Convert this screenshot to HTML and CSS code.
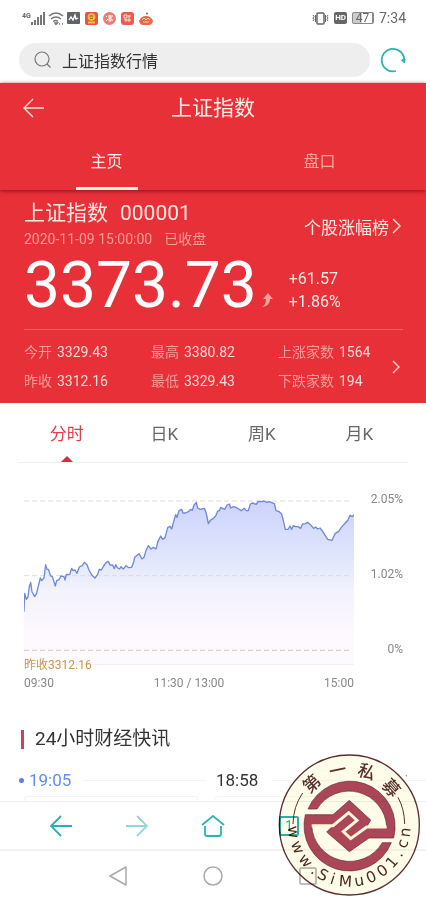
FILE: index.html
```html
<!DOCTYPE html>
<html lang="zh-CN">
<head>
    <meta charset="UTF-8">
    <meta name="viewport" content="width=device-width, initial-scale=1.0">
    <title>上证指数</title>
    <link rel="stylesheet" href="styles.css">
</head>
<body>
<div class="app">

    <!-- Status bar -->
    <div class="status-bar">
        <div class="status-left">
            <span class="network">4G</span>
            <svg width="14" height="13" viewBox="0 0 14 13" fill="#777"><path d="M0 10h2v3H0zM3 8h2v5H3zM6 5h2v8H6zM9 3h2v10H9zM12 0h2v13h-2z"/></svg>
            <svg class="wifi" width="16" height="13" viewBox="0 0 16 13" fill="none" stroke="#777" stroke-width="1.4"><path d="M1 4Q8-2 15 4M3 7q5-4 10 0M5 9.500q3-2 5 0"/><path d="M7 11l1 1.500L9.500 11zM11 12h1M14 12h1" fill="#777"/></svg>
            <svg width="13" height="12" viewBox="0 0 13 12"><rect width="13" height="12" rx="1" fill="#606468"/><path d="M2 8l2-3 2 3 2-5 1 4 2-1" fill="none" stroke="#fff" stroke-width="1.300"/></svg>
            <svg width="13" height="13" viewBox="0 0 13 13"><rect width="13" height="13" rx="2" fill="#e2583f"/><circle cx="6.500" cy="5" r="3.800" fill="#f9c13c"/><path d="M4.500 4h4M5 6q1.500 1 3 0" stroke="#b4372a" fill="none"/><path d="M3 10.500h7" stroke="#f9c13c" stroke-width="2"/></svg>
            <svg width="13" height="13" viewBox="0 0 13 13"><circle cx="6.500" cy="6.500" r="6.500" fill="#f07a74"/><path d="M3 4l1 1M3 9l2-2M5 4h5M7 3v7M5 6h4M5 8h5" stroke="#fff" fill="none"/></svg>
            <svg width="13" height="13" viewBox="0 0 13 13"><rect width="13" height="13" rx="3" fill="#ec5b50"/><path d="M3 3h3v3H3zM3 8h7M8 3v7M5 7v3M7 4h3" stroke="#ffe4d4" fill="none"/></svg>
            <svg width="14" height="13" viewBox="0 0 14 13"><circle cx="8" cy="1.500" r="1" fill="#8b5a4b"/><path d="M0 9q2-5 7-5t7 5q-1 4-4 4H4q-3 0-4-4z" fill="#e8674d"/><path d="M3 8l2-2 2 2 2-2 2 2M4 10h6" stroke="#ffd0a0" fill="none"/></svg>
        </div>
        <div class="status-right">
            <svg width="17" height="13" viewBox="0 0 17 13" fill="none" stroke="#666"><rect x="5" y="1" width="7" height="11" rx="1" stroke-width="1.500"/><path d="M1 3l1 1.500L1 6l1 1.500L1 9M3.500 3v7M16 3l-1 1.500L16 6l-1 1.500L16 9M13.500 3v7"/></svg>
            <span class="hd">HD</span>
            <span class="battery">47</span>
            <span>7:34</span>
        </div>
    </div>

    <!-- Search -->
    <div class="search-bar">
        <label class="search-box">
            <svg width="18" height="18" viewBox="0 0 18 18" fill="none" stroke="#777" stroke-width="1.200"><circle cx="8" cy="8" r="7"/><path d="M13 13l3.500 3.500"/></svg>
            <input class="search-input" type="text" value="上证指数行情" aria-label="搜索">
        </label>
        <button class="icon-button" aria-label="刷新">
            <svg width="26" height="26" viewBox="0 0 26 26" fill="none" stroke="#2ab3ab" stroke-width="1.800"><path d="M16 24A11.300 11.300 0 1 1 24.300 13"/><path d="M21.500 13l3 3 .5-4z" fill="#2ab3ab" stroke-width="1"/></svg>
        </button>
    </div>

    <!-- Header -->
    <header class="header">
        <div class="title-row">
            <button class="icon-button" aria-label="返回">
                <svg width="21" height="20" viewBox="0 0 21 20" fill="none" stroke="#ffe3dc" stroke-width="1.400"><path d="M10 1L1 10l9 9M1 10h20"/></svg>
            </button>
            <h1>上证指数</h1>
        </div>
        <nav class="tabs">
            <a class="tab active" href="#home">主页</a>
            <a class="tab" href="#pankou">盘口</a>
        </nav>
    </header>

    <main class="content">
        <!-- Quote -->
        <section class="quote">
            <div class="quote-top">
                <div>
                    <h2>上证指数<span class="code">000001</span></h2>
                    <p class="date">2020-11-09 15:00:00<span class="closed">已收盘</span></p>
                </div>
                <a class="rank-link" href="#rank">个股涨幅榜<svg width="9" height="16" viewBox="0 0 9 16" fill="none" stroke="#ffe3dc" stroke-width="1.400"><path d="M1 1l7 7-7 7"/></svg></a>
            </div>
            <div class="price-row">
                <span class="price">3373.73</span>
                <svg class="up" width="11" height="14" viewBox="0 0 11 14" fill="#ff9c9c"><path d="M6 0l5 6H8q0 7-8 8 4-2 4-8H1z"/></svg>
                <div class="change"><p>+61.57</p><p>+1.86%</p></div>
            </div>
            <div class="stats-row">
                <dl class="stats">
                    <div><dt>今开</dt><dd>3329.43</dd></div>
                    <div><dt>最高</dt><dd>3380.82</dd></div>
                    <div><dt>上涨家数</dt><dd>1564</dd></div>
                    <div><dt>昨收</dt><dd>3312.16</dd></div>
                    <div><dt>最低</dt><dd>3329.43</dd></div>
                    <div><dt>下跌家数</dt><dd>194</dd></div>
                </dl>
                <svg class="more" width="8" height="14" viewBox="0 0 8 14" fill="none" stroke="#ffd0cc" stroke-width="1.400"><path d="M1 1l6 6-6 6"/></svg>
            </div>
        </section>

        <!-- Chart -->
        <nav class="periods">
            <a class="period active" href="#m">分时</a>
            <a class="period" href="#d">日K</a>
            <a class="period" href="#w">周K</a>
            <a class="period" href="#mo">月K</a>
        </nav>
        <section class="chart">
            <div class="plot">
                <svg class="plot-svg" viewBox="72 51 990 507" preserveAspectRatio="none">
                    <defs>
                        <linearGradient id="area" x1="0" y1="0" x2="0" y2="1">
                            <stop offset="0" stop-color="#cdd3fb"/>
                            <stop offset=".35" stop-color="#e0e6fc"/>
                            <stop offset=".55" stop-color="#f3f2fd"/>
                            <stop offset=".8" stop-color="#fcf8fe"/>
                            <stop offset="1" stop-color="#fefbff"/>
                        </linearGradient>
                    </defs>
                    <path fill="url(#area)" d="M72 395L74 340 79 358 84 351 88 320 92 307 96 336 104 350 110 340 114 322 121 294 125 302 132 294 137 254 141 268 145 268 152 288 157 290 166 318 170 302 177 299 183 288 192 290 195 300 199 283 209 284 215 265 219 272 225 270 231 280 238 261 247 257 253 247 261 254 267 270 276 286 285 294 293 283 298 268 304 270 311 258 318 248 325 244 330 255 338 255 343 266 347 254 352 263 359 267 363 260 370 267 378 257 386 263 395 262 401 246 404 232 417 221 426 237 432 232 438 212 445 197 453 207 460 202 468 207 474 184 482 168 488 178 495 173 503 143 510 139 515 147 521 125 527 104 531 112 537 92 545 88 549 99 557 99 565 95 572 88 577 91 582 75 589 67 593 84 601 88 613 85 619 100 625 131 631 121 639 116 647 108 653 94 659 91 662 82 674 88 681 75 688 72 692 84 700 80 708 82 716 87 724 92 733 85 739 92 745 92 751 72 757 69 769 73 774 64 785 65 792 63 800 67 808 65 823 71 828 92 836 94 845 102 850 122 856 148 864 148 870 138 875 148 880 137 887 140 894 140 902 145 908 132 917 131 923 127 932 135 941 145 947 141 953 147 960 144 968 154 983 178 996 181 1005 161 1016 154 1024 142 1033 132 1044 120 1050 106 1057 110 1062 104V553H72z"/>
                    <path class="grid" d="M72 63H1056M72 287H1056"/>
                    <path class="grid zero" d="M72 511H1056"/>
                    <path class="axis" d="M72 553H1062"/>
                    <path class="line" d="M72 395L74 340 79 358 84 351 88 320 92 307 96 336 104 350 110 340 114 322 121 294 125 302 132 294 137 254 141 268 145 268 152 288 157 290 166 318 170 302 177 299 183 288 192 290 195 300 199 283 209 284 215 265 219 272 225 270 231 280 238 261 247 257 253 247 261 254 267 270 276 286 285 294 293 283 298 268 304 270 311 258 318 248 325 244 330 255 338 255 343 266 347 254 352 263 359 267 363 260 370 267 378 257 386 263 395 262 401 246 404 232 417 221 426 237 432 232 438 212 445 197 453 207 460 202 468 207 474 184 482 168 488 178 495 173 503 143 510 139 515 147 521 125 527 104 531 112 537 92 545 88 549 99 557 99 565 95 572 88 577 91 582 75 589 67 593 84 601 88 613 85 619 100 625 131 631 121 639 116 647 108 653 94 659 91 662 82 674 88 681 75 688 72 692 84 700 80 708 82 716 87 724 92 733 85 739 92 745 92 751 72 757 69 769 73 774 64 785 65 792 63 800 67 808 65 823 71 828 92 836 94 845 102 850 122 856 148 864 148 870 138 875 148 880 137 887 140 894 140 902 145 908 132 917 131 923 127 932 135 941 145 947 141 953 147 960 144 968 154 983 178 996 181 1005 161 1016 154 1024 142 1033 132 1044 120 1050 106 1057 110 1062 104"/>
                </svg>
                <span class="prev-close">昨收3312.16</span>
                <div class="x-axis"><span>09:30</span><span>11:30 / 13:00</span><span>15:00</span></div>
            </div>
            <div class="y-axis"><span>2.05%</span><span>1.02%</span><span>0%</span></div>
        </section>

        <!-- News -->
        <section class="news">
            <h3>24小时财经快讯</h3>
            <div class="timeline">
                <span class="time latest">19:05</span>
                <span class="time">18:58</span>
            </div>
            <div class="cards"><div class="card"></div><div class="card"></div></div>
        </section>
    </main>

    <!-- Browser toolbar -->
    <nav class="toolbar">
        <button class="icon-button" aria-label="后退"><svg width="22" height="22" viewBox="0 0 22 22" fill="none" stroke="#2aafae" stroke-width="1.800"><path d="M11 1L1 11l10 10M1 11h21"/></svg></button>
        <button class="icon-button" aria-label="前进"><svg width="22" height="22" viewBox="0 0 22 22" fill="none" stroke="#93d8d7" stroke-width="1.800"><path d="M11 1l10 10-10 10M21 11H0"/></svg></button>
        <button class="icon-button" aria-label="主页"><svg width="24" height="22" viewBox="0 0 24 22" fill="none" stroke="#2ab5b4" stroke-width="1.800"><path d="M1 10L12 1l11 9M4 11v8q0 2 2 2h12q2 0 2-2v-8"/></svg></button>
        <button class="icon-button tab-count" aria-label="标签页">1</button>
        <button class="icon-button" aria-label="菜单"></button>
    </nav>

    <!-- System keys -->
    <div class="system-bar">
        <button class="icon-button" aria-label="返回键"><svg width="18" height="20" viewBox="0 0 18 20" fill="none" stroke="#aaa" stroke-width="1.500" stroke-linejoin="round"><path d="M17 1v18L1 10z"/></svg></button>
        <button class="icon-button" aria-label="主屏键"><svg width="20" height="20" viewBox="0 0 20 20" fill="none" stroke="#aaa" stroke-width="1.500"><circle cx="10" cy="10" r="9"/></svg></button>
        <button class="icon-button" aria-label="多任务键"><svg width="18" height="18" viewBox="0 0 18 18" fill="none" stroke="#aaa" stroke-width="1.500"><rect x="1" y="1" width="16" height="16" rx="1"/></svg></button>
    </div>

    <!-- Stamp -->
    <svg class="stamp" viewBox="22 20 435 435">
        <circle cx="239" cy="239" r="210" fill="#fffdea" stroke="#57302f" stroke-width="4"/>
        <path d="M70 236Q71 183 99 143M405 236Q404 190 385 156" fill="none" stroke="#57302f" stroke-width="3"/>
        <g class="stamp-logo">
            <path d="M115 191A136 136 0 0 1 372 278H298L239 319 171 260 190 241 237 202 262 225 221 259 243 280 291 245H351A113 113 0 0 0 142 191Z"/>
            <path d="M107 208H190L239 165 303 224 291 245 243 280 221 259 262 225 237 202 190 241H126A114 114 0 0 0 338 292H365A136 136 0 0 1 107 208Z"/>
            <path class="cut" d="M126 241H190L237 202 262 225 221 259 243 280 291 245H351"/>
        </g>
        <g class="stamp-name" transform="translate(239 240)">
            <text y="-150" transform="rotate(-42)">第</text>
            <text y="-150" transform="rotate(-12)">一</text>
            <text y="-150" transform="rotate(18)">私</text>
            <text y="-150" transform="rotate(48)">募</text>
        </g>
        <g class="stamp-url" transform="translate(239 240)">
            <text y="184" transform="rotate(83)">w</text>
            <text y="184" transform="rotate(67)">w</text>
            <text y="184" transform="rotate(51)">w</text>
            <text y="184" transform="rotate(38)">.</text>
            <text y="184" transform="rotate(28)">S</text>
            <text y="184" transform="rotate(17)">i</text>
            <text y="184" transform="rotate(4)">M</text>
            <text y="184" transform="rotate(-10)">u</text>
            <text y="184" transform="rotate(-23)">0</text>
            <text y="184" transform="rotate(-36)">0</text>
            <text y="184" transform="rotate(-49)">1</text>
            <text y="184" transform="rotate(-60)">.</text>
            <text y="184" transform="rotate(-71)">c</text>
            <text y="184" transform="rotate(-83)">n</text>
        </g>
        <circle cx="410" cy="91" r="2" fill="#777"/>
    </svg>
</div>
</body>
</html>
```

FILE: styles.css
```css
* { box-sizing: border-box; }
body { margin: 0; font-family: Roboto, "Noto Sans CJK SC", sans-serif; background: #fff; color: #333; }
h1, h2, h3, p, dl, dd { margin: 0; font-weight: 400; }
a { color: inherit; text-decoration: none; }
svg { display: block; flex: none; }
.app { position: relative; display: flex; flex-direction: column; height: 100vh; overflow: hidden; }
.icon-button { display: flex; align-items: center; justify-content: center; padding: 0; border: none; background: none; }

/* status bar */
.status-bar { display: flex; justify-content: space-between; align-items: center; height: 36px; padding: 0 20px 0 22px; color: #666; font-size: 14px; flex: none; }
.status-left { display: flex; align-items: center; gap: 5px; }
.network { align-self: flex-start; margin-right: -5px; font-size: 7px; line-height: 8px; font-weight: 700; }
.wifi { margin: 0 -2px; }
.status-right { display: flex; align-items: center; gap: 5px; }
.hd { padding: 0 1px; border-radius: 2px; background: #666; color: #fff; font-size: 8px; line-height: 12px; font-weight: 700; }
.battery { width: 22px; border: 1px solid #888; border-right-width: 2px; border-radius: 2px; background: linear-gradient(90deg, #ccc 47%, #fff 47%); font-size: 12px; line-height: 10px; text-align: center; }

/* search */
.search-bar { display: flex; align-items: center; justify-content: space-between; gap: 10px; height: 47px; padding: 0 20px 0 19px; flex: none; }
.search-box { display: flex; align-items: center; gap: 10px; flex: 1; height: 34px; padding: 0 15px; border-radius: 17px; background: #eee; }
.search-input { flex: 1; min-width: 0; padding: 0; border: none; outline: none; background: none; color: #333; font: inherit; font-size: 16px; }

/* header */
.header { position: relative; z-index: 1; flex: none; background: #e83039; color: #fff0ea; box-shadow: 0 1px 4px #8c1018; }
.title-row { display: grid; grid-template-columns: 1fr auto 1fr; align-items: center; height: 50px; padding: 0 23px; }
.title-row .icon-button { justify-self: start; }
.title-row h1 { font-size: 21px; line-height: 30px; }
.tabs { display: grid; grid-template-columns: 1fr 1fr; height: 57px; justify-items: center; }
.tab { width: 62px; height: 57px; font-size: 16px; line-height: 57px; text-align: center; color: #f6a6a1; }
.tab.active { color: #fff0ea; border-bottom: 3px solid #fff0ea; }

.content { flex: 1; min-height: 0; overflow: hidden; }

/* quote */
.quote { padding: 10px 23px 7px 24px; background: #e83039; color: #ffe8e2; }
.quote-top { display: flex; justify-content: space-between; align-items: center; }
.quote h2 { font-size: 21px; line-height: 26px; }
.code { margin-left: 12px; }
.date { font-size: 14px; line-height: 26px; color: #f79c9a; }
.closed { margin-left: 12px; }
.rank-link { display: flex; align-items: center; gap: 3px; padding-right: 2px; font-size: 17px; }
.price-row { display: flex; align-items: center; height: 68px; color: #fff; }
.price { font-size: 64px; line-height: 68px; }
.up { margin: 28px 16px 0 5px; }
.change { padding-top: 8px; font-size: 16px; line-height: 23px; color: #ffe8e2; }
.stats-row { display: flex; align-items: center; margin-top: 9px; padding-top: 8px; border-top: 1px solid #f2625f; }
.stats { display: grid; grid-template-columns: 1fr 1fr 114px; flex: 1; font-size: 14px; line-height: 29px; white-space: nowrap; }
.stats div { display: flex; gap: 5px; }
.stats dt { color: #f79c9a; }
.stats dd { color: #ffd9d4; }
.more { margin-right: 3px; }

/* chart */
.periods { display: grid; grid-template-columns: repeat(4, 1fr); margin: 0 18px; padding-top: 4px; border-bottom: 1px solid #f0f0f0; }
.period { position: relative; font-size: 17px; line-height: 55px; text-align: center; color: #666; }
.period.active { color: #e04048; }
.period.active::after { content: ""; position: absolute; left: 50%; bottom: 0; margin-left: -6px; border: 6px solid transparent; border-top: none; border-bottom-color: #d0303c; }
.chart { display: flex; padding: 28px 23px 0 24px; font-size: 12px; line-height: 16px; color: #888; }
.plot { position: relative; flex: 1; padding-top: 6px; }
.plot-svg { width: 100%; height: 169px; }
.grid { fill: none; stroke: #dcdcdc; stroke-dasharray: 15 9; stroke-width: 3; }
.grid.zero { stroke: #dfd0c0; stroke-width: 4; }
.axis { fill: none; stroke: #f2eef4; stroke-width: 3; }
.line { fill: none; stroke: #6f88dc; stroke-width: 4; stroke-linejoin: round; }
.prev-close { position: absolute; left: 0; top: 166px; color: #c8954f; }
.x-axis { display: flex; justify-content: space-between; padding-top: 9px; }
.y-axis { display: flex; flex-direction: column; justify-content: space-between; width: 49px; height: 166px; text-align: right; }

/* news */
.news { padding: 35px 0 0 21px; }
.news h3 { display: flex; align-items: center; gap: 11px; font-size: 19px; line-height: 26px; }
.news h3::before { content: ""; width: 3px; height: 19px; background: #c94452; }
.timeline { display: grid; grid-template-columns: 187px 1fr; margin: 14px 0 0 -2px; font-size: 17px; line-height: 28px; }
.time { display: flex; align-items: center; gap: 13px; padding-left: 10px; }
.time::after { content: ""; flex: 1; height: 1px; background: #f4f4f4; }
.latest { padding-left: 0; gap: 5px; color: #5f8df0; }
.latest::before { content: ""; width: 5px; height: 5px; border-radius: 50%; background: #5f7fe8; }
.latest::after { margin-left: 7px; }
.cards { display: flex; gap: 16px; margin: 2px 0 0 3px; }
.card { flex: none; width: 174px; height: 60px; border: 1px solid #f4f4f4; border-radius: 3px; }

/* bottom bars */
.toolbar { display: grid; grid-template-columns: repeat(5, 1fr); flex: none; align-items: center; justify-items: center; height: 48px; padding: 0 23px; border-top: 1px solid #eee; background: #fff; }
.tab-count { width: 20px; height: 20px; border: 2px solid #2ab5b4; border-radius: 2px; color: #2ab5b4; font-family: inherit; font-size: 14px; }
.system-bar { display: grid; grid-template-columns: repeat(3, 1fr); flex: none; align-items: center; justify-items: center; height: 51px; padding: 0 71px; border-top: 2px solid #f2f2f2; background: #fff; }

/* stamp */
.stamp { position: absolute; z-index: 2; right: 4px; bottom: 3px; width: 145px; height: 145px; mix-blend-mode: multiply; pointer-events: none; }
.stamp-logo { fill: #aa4657; stroke: #6d2535; stroke-width: 2; }
.stamp-logo .cut { fill: none; stroke: #fff8d8; stroke-width: 9; }
.stamp-name { fill: #57302f; font-family: "Noto Sans CJK SC", sans-serif; font-size: 52px; font-weight: 500; text-anchor: middle; }
.stamp-url { fill: #4a2a26; font-family: "DejaVu Sans", sans-serif; font-size: 46px; text-anchor: middle; }
```
